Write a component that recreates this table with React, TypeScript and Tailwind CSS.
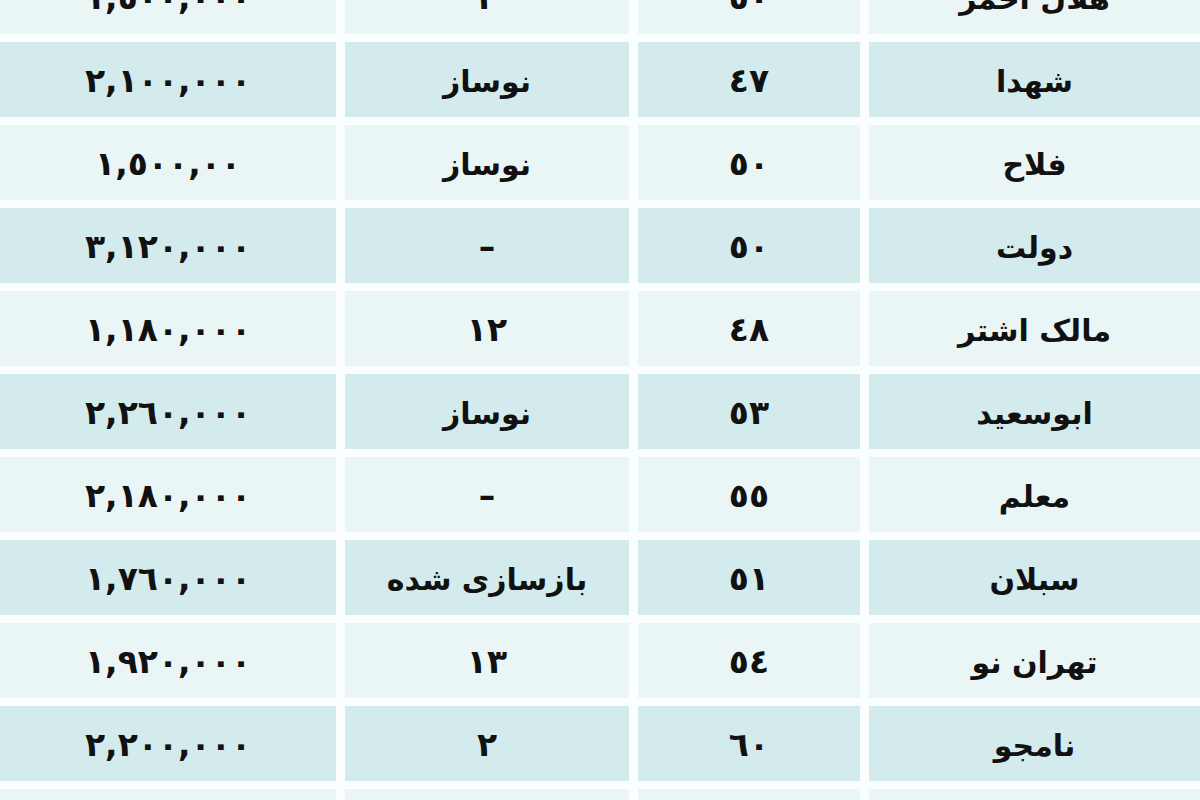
const rows: [string, string, string, string][] = [
  ["١,٥٠٠,٠٠٠", "٢", "٥٠", "هلال احمر"],
  ["٢,١٠٠,٠٠٠", "نوساز", "٤٧", "شهدا"],
  ["١,٥٠٠,٠٠", "نوساز", "٥٠", "فلاح"],
  ["٣,١٢٠,٠٠٠", "–", "٥٠", "دولت"],
  ["١,١٨٠,٠٠٠", "١٢", "٤٨", "مالک اشتر"],
  ["٢,٢٦٠,٠٠٠", "نوساز", "٥٣", "ابوسعید"],
  ["٢,١٨٠,٠٠٠", "–", "٥٥", "معلم"],
  ["١,٧٦٠,٠٠٠", "بازسازی شده", "٥١", "سبلان"],
  ["١,٩٢٠,٠٠٠", "١٣", "٥٤", "تهران نو"],
  ["٢,٢٠٠,٠٠٠", "٢", "٦٠", "نامجو"],
  ["١,٨٥٠,٠٠٠", "٥", "٤٩", "پیروزی"],
];

const isNum = (s: string) => /^[٠-٩,–]+$/.test(s);

export default function App() {
  return (
    <div className="w-[1200px] h-[800px] overflow-hidden bg-[#fbfefe]">
      <div
        className="-mt-[41px] flex flex-col gap-y-[8px] text-[#111]"
        style={{ fontFamily: '"DejaVu Sans", sans-serif' }}
      >
        {rows.map((r, i) => {
          const bg = i % 2 === 1 ? "bg-[#d3ebed]" : "bg-[#eaf5f6]";
          const widths = ["w-[336px]", "w-[284px]", "w-[222px]", "w-[331px]"];
          return (
            <div key={i} className="flex gap-x-[9px] h-[75px]">
              {r.map((t, j) => (
                <div
                  key={j}
                  className={`${widths[j]} ${bg} flex items-center justify-center pt-[3px] font-bold ${
                    isNum(t) ? "text-[33px]" : "text-[30px]"
                  }`}
                  dir={isNum(t) ? "ltr" : "rtl"}
                >
                  {t}
                </div>
              ))}
            </div>
          );
        })}
      </div>
    </div>
  );
}
